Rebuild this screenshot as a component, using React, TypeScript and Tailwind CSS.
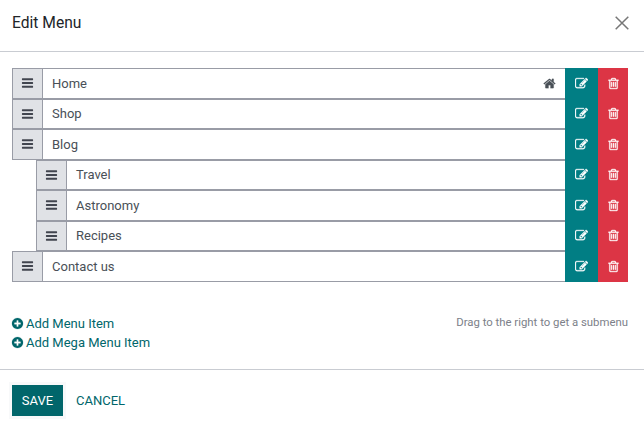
import React from "react";

const BARS =
  "M1664 1344v128q0 26-19 45t-45 19h-1408q-26 0-45-19t-19-45v-128q0-26 19-45t45-19h1408q26 0 45 19t19 45zm0-512v128q0 26-19 45t-45 19h-1408q-26 0-45-19t-19-45v-128q0-26 19-45t45-19h1408q26 0 45 19t19 45zm0-512v128q0 26-19 45t-45 19h-1408q-26 0-45-19t-19-45v-128q0-26 19-45t45-19h1408q26 0 45 19t19 45z";
const EDIT =
  "M888 1184l116-116-152-152-116 116v56h96v96h56zm440-720q-16-16-33 1l-350 350q-17 17-1 33t33-1l350-350q17-17 1-33zm80 594v190q0 119-84.500 203.500t-203.500 84.500h-832q-119 0-203.500-84.500t-84.500-203.500v-832q0-119 84.500-203.500t203.500-84.500h832q63 0 117 25 15 7 18 23 3 17-9 29l-49 49q-14 14-32 8-23-6-45-6h-832q-66 0-113 47t-47 113v832q0 66 47 113t113 47h832q66 0 113-47t47-113v-126q0-13 9-22l64-64q15-15 35-7t20 29zm-96-738l288 288-672 672h-288v-288zm444 132l-92 92-288-288 92-92q28-28 68-28t68 28l152 152q28 28 28 68t-28 68z";
const TRASH =
  "M704 736v576q0 14-9 23t-23 9h-64q-14 0-23-9t-9-23v-576q0-14 9-23t23-9h64q14 0 23 9t9 23zm256 0v576q0 14-9 23t-23 9h-64q-14 0-23-9t-9-23v-576q0-14 9-23t23-9h64q14 0 23 9t9 23zm256 0v576q0 14-9 23t-23 9h-64q-14 0-23-9t-9-23v-576q0-14 9-23t23-9h64q14 0 23 9t9 23zm128 724v-948h-896v948q0 22 7 40.500t14.500 27 10.500 8.500h832q3 0 10.500-8.500t14.500-27 7-40.500zm-672-1076h448l-48-117q-7-9-17-11h-317q-10 2-17 11zm928 32v64q0 14-9 23t-23 9h-96v948q0 83-47 143.500t-113 60.500h-832q-66 0-113-58.500t-47-141.500v-952h-96q-14 0-23-9t-9-23v-64q0-14 9-23t23-9h309l70-167q15-37 54-63t79-26h320q40 0 79 26t54 63l70 167h309q14 0 23 9t9 23z";
const HOME =
  "M1472 992v480q0 26-19 45t-45 19h-384v-384h-256v384h-384q-26 0-45-19t-19-45v-480q0-1 .5-3t.5-3l575-474 575 474q1 2 1 6zm223-69l-62 74q-8 9-21 11h-3q-13 0-21-7l-692-577-692 577q-12 8-24 7-13-2-21-11l-62-74q-8-10-7-23.500t11-21.500l719-599q32-26 76-26t76 26l244 204v-195q0-14 9-23t23-9h192q14 0 23 9t9 23v408l219 182q10 8 11 21.500t-7 23.500z";
const PLUS =
  "M1344 960v-128q0-26-19-45t-45-19h-256v-256q0-26-19-45t-45-19h-128q-26 0-45 19t-19 45v256h-256q-26 0-45 19t-19 45v128q0 26 19 45t45 19h256v256q0 26 19 45t45 19h128q26 0 45-19t19-45v-256h256q26 0 45-19t19-45zm320-64q0 209-103 385.500t-279.500 279.500-385.500 103-385.500-103-279.500-279.500-103-385.500 103-385.500 279.500-279.500 385.500-103 385.500 103 279.500 279.500 103 385.500z";

function Icon({ d, className }: { d: string; className: string }) {
  return (
    <svg viewBox="0 0 1792 1792" fill="currentColor" stroke="currentColor" className={className} aria-hidden="true">
      <path d={d} />
    </svg>
  );
}

type Item = { label: string; nested?: boolean; home?: boolean };

const items: Item[] = [
  { label: "Home", home: true },
  { label: "Shop" },
  { label: "Blog" },
  { label: "Travel", nested: true },
  { label: "Astronomy", nested: true },
  { label: "Recipes", nested: true },
  { label: "Contact us" },
];

function Row({ item }: { item: Item }) {
  return (
    <li className={`flex h-[30.5px] ${item.nested ? "ml-6" : ""}`}>
      <span className="flex w-[31px] items-center justify-center border border-[#999ca6] bg-[#e0e2e6] text-[#41454f]">
        <Icon d={BARS} className="h-[14px] w-[13px] stroke-0" />
      </span>
      <span className="flex flex-1 items-center justify-between border-y border-[#999ca6] pr-[9px] pl-[9px]">
        <span>{item.label}</span>
        {item.home && <Icon d={HOME} className="size-[13px] stroke-[20]" />}
      </span>
      <button className="flex w-[33px] items-center justify-center bg-[#017e84] text-white">
        <Icon d={EDIT} className="size-[13px] stroke-[40]" />
      </button>
      <button className="flex w-[30px] items-center justify-center bg-[#dc3545] text-white">
        <Icon d={TRASH} className="size-[13px] stroke-[40]" />
      </button>
    </li>
  );
}

export default function App() {
  return (
    <div className="flex h-[427px] w-[644px] flex-col bg-white font-['Roboto',sans-serif] text-[13px] leading-[19px] text-[#495057]">
      <header className="flex h-[52px] items-start justify-between border-b border-[#c9ccd2] pt-[11px] pr-[15px] pl-3">
        <h4 className="text-[15.6px] leading-6 text-[#212529]">Edit Menu</h4>
        <button className="mt-[5px] text-[#777777]" aria-label="Close">
          <svg viewBox="0 0 14 14" className="size-[14px]" stroke="currentColor" strokeWidth="1.5" fill="none">
            <path d="M.7.7l12.600 12.600M13.300.7l-12.600 12.600" />
          </svg>
        </button>
      </header>
      <main className="flex h-[317px] flex-col px-3 pt-4 pr-4">
        <ul>
          {items.map((item) => (
            <Row key={item.label} item={item} />
          ))}
        </ul>
        <div className="mt-[32px] flex items-start justify-between">
          <div className="text-[#01666b]">
            <a className="flex items-center gap-[2px]">
              <Icon d={PLUS} className="-ml-[1px] size-[13px] stroke-[20]" />
              Add Menu Item
            </a>
            <a className="flex items-center gap-[2px]">
              <Icon d={PLUS} className="-ml-[1px] size-[13px] stroke-[20]" />
              Add Mega Menu Item
            </a>
          </div>
          <small className="text-[11.375px] leading-4 text-[#7c7f89]">Drag to the right to get a submenu</small>
        </div>
      </main>
      <footer className="flex flex-1 items-start border-t border-[#c9ccd2] pt-[15px] pl-3">
        <button className="h-[31px] w-[51px] bg-[#01666b] text-white shadow-[0_0_0_3px_#f8f9fa]">SAVE</button>
        <button className="ml-[13px] h-[31px] text-[#01666b]">CANCEL</button>
      </footer>
    </div>
  );
}
